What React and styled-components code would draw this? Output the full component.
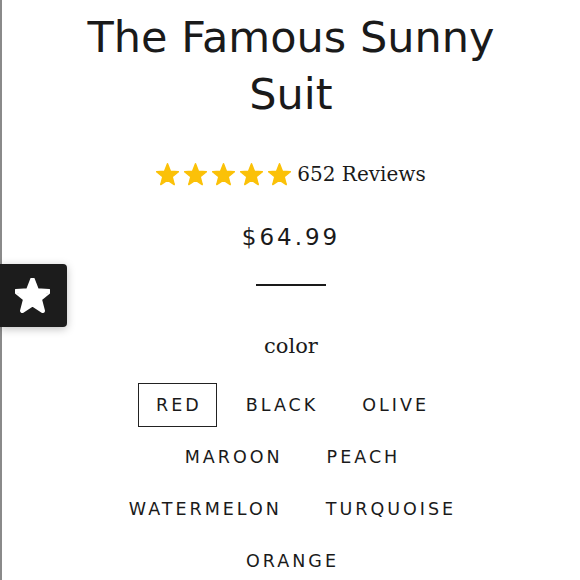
import React from "react";
import styled, { createGlobalStyle } from "styled-components";

const Global = createGlobalStyle`
  html, body { margin: 0; padding: 0; background: #fff; overflow: hidden; }
  body { font-family: "DejaVu Sans", sans-serif; color: #1a1a1a; }
`;

const Page = styled.div`
  position: relative;
  width: 580px;
  min-height: 580px;
  box-sizing: border-box;
  border-left: 2px solid #8a8a8a;
  display: flex;
  flex-direction: column;
  align-items: center;
  padding-top: 9px;
  & > * { flex-shrink: 0; }
`;

const Title = styled.h1`
  margin: 0;
  width: 460px;
  text-align: center;
  font-family: "DejaVu Sans", sans-serif;
  font-weight: 400;
  font-size: 43px;
  line-height: 57px;
  color: #1a1a1a;
`;

const RatingRow = styled.div`
  display: flex;
  align-items: center;
  margin-top: 39px;
  gap: 6px;
`;

const Stars = styled.div`
  display: flex;
  gap: 5px;
`;

const ReviewCount = styled.span`
  font-family: "DejaVu Serif", serif;
  font-size: 20px;
  color: #1a1a1a;
`;

const Price = styled.div`
  margin-top: 38px;
  font-size: 23px;
  letter-spacing: 3px;
  color: #1a1a1a;
`;

const Divider = styled.div`
  width: 70px;
  height: 2px;
  background: #1a1a1a;
  margin-top: 34px;
`;

const Label = styled.div`
  margin-top: 48px;
  font-family: "DejaVu Serif", serif;
  font-size: 21px;
  color: #1a1a1a;
`;

const Options = styled.div`
  margin-top: 25px;
  width: 372px;
  display: flex;
  flex-wrap: wrap;
  justify-content: center;
  column-gap: 11px;
  row-gap: 8px;
`;

const Option = styled.button`
  box-sizing: border-box;
  height: 44px;
  padding: 0 14px 0 17px;
  background: transparent;
  border: 1.5px solid ${(p) => (p.$active ? "#222" : "transparent")};
  font-family: "DejaVu Sans", sans-serif;
  font-size: 17.5px;
  letter-spacing: 3px;
  color: #1a1a1a;
  cursor: pointer;
`;

const FloatButton = styled.div`
  position: absolute;
  left: -2px;
  top: 264px;
  width: 67px;
  height: 63px;
  padding-right: 3px;
  box-sizing: border-box;
  background: #1c1c1c;
  border-radius: 0 4px 4px 0;
  box-shadow: 0 2px 8px rgba(0, 0, 0, 0.25);
  display: flex;
  align-items: center;
  justify-content: center;
`;

const starPoints = (cx, cy, R, r) => {
  const pts = [];
  for (let i = 0; i < 10; i++) {
    const a = (Math.PI / 5) * i - Math.PI / 2;
    const rad = i % 2 === 0 ? R : r;
    pts.push(`${(cx + rad * Math.cos(a)).toFixed(2)},${(cy + rad * Math.sin(a)).toFixed(2)}`);
  }
  return pts.join(" ");
};

const Star = ({ size = 22, color = "#fbc108", round = 1.5 }) => (
  <svg width={size} height={size} viewBox="0 0 24 24">
    <polygon
      points={starPoints(12, 12.8, 12, 5.2)}
      fill={color}
      stroke={color}
      strokeWidth={round}
      strokeLinejoin="round"
    />
  </svg>
);

const colors = ["RED", "BLACK", "OLIVE", "MAROON", "PEACH", "WATERMELON", "TURQUOISE", "ORANGE"];

export default function App() {
  return (
    <>
      <Global />
      <Page>
        <Title>The Famous Sunny Suit</Title>
        <RatingRow>
          <Stars>
            {[0, 1, 2, 3, 4].map((i) => (
              <Star key={i} size={23} />
            ))}
          </Stars>
          <ReviewCount>652 Reviews</ReviewCount>
        </RatingRow>
        <Price>$64.99</Price>
        <Divider />
        <Label>color</Label>
        <Options>
          {colors.map((c, i) => (
            <Option key={c} $active={i === 0}>
              {c}
            </Option>
          ))}
        </Options>
        <FloatButton>
          <Star size={35} color="#fff" round={3} />
        </FloatButton>
      </Page>
    </>
  );
}
